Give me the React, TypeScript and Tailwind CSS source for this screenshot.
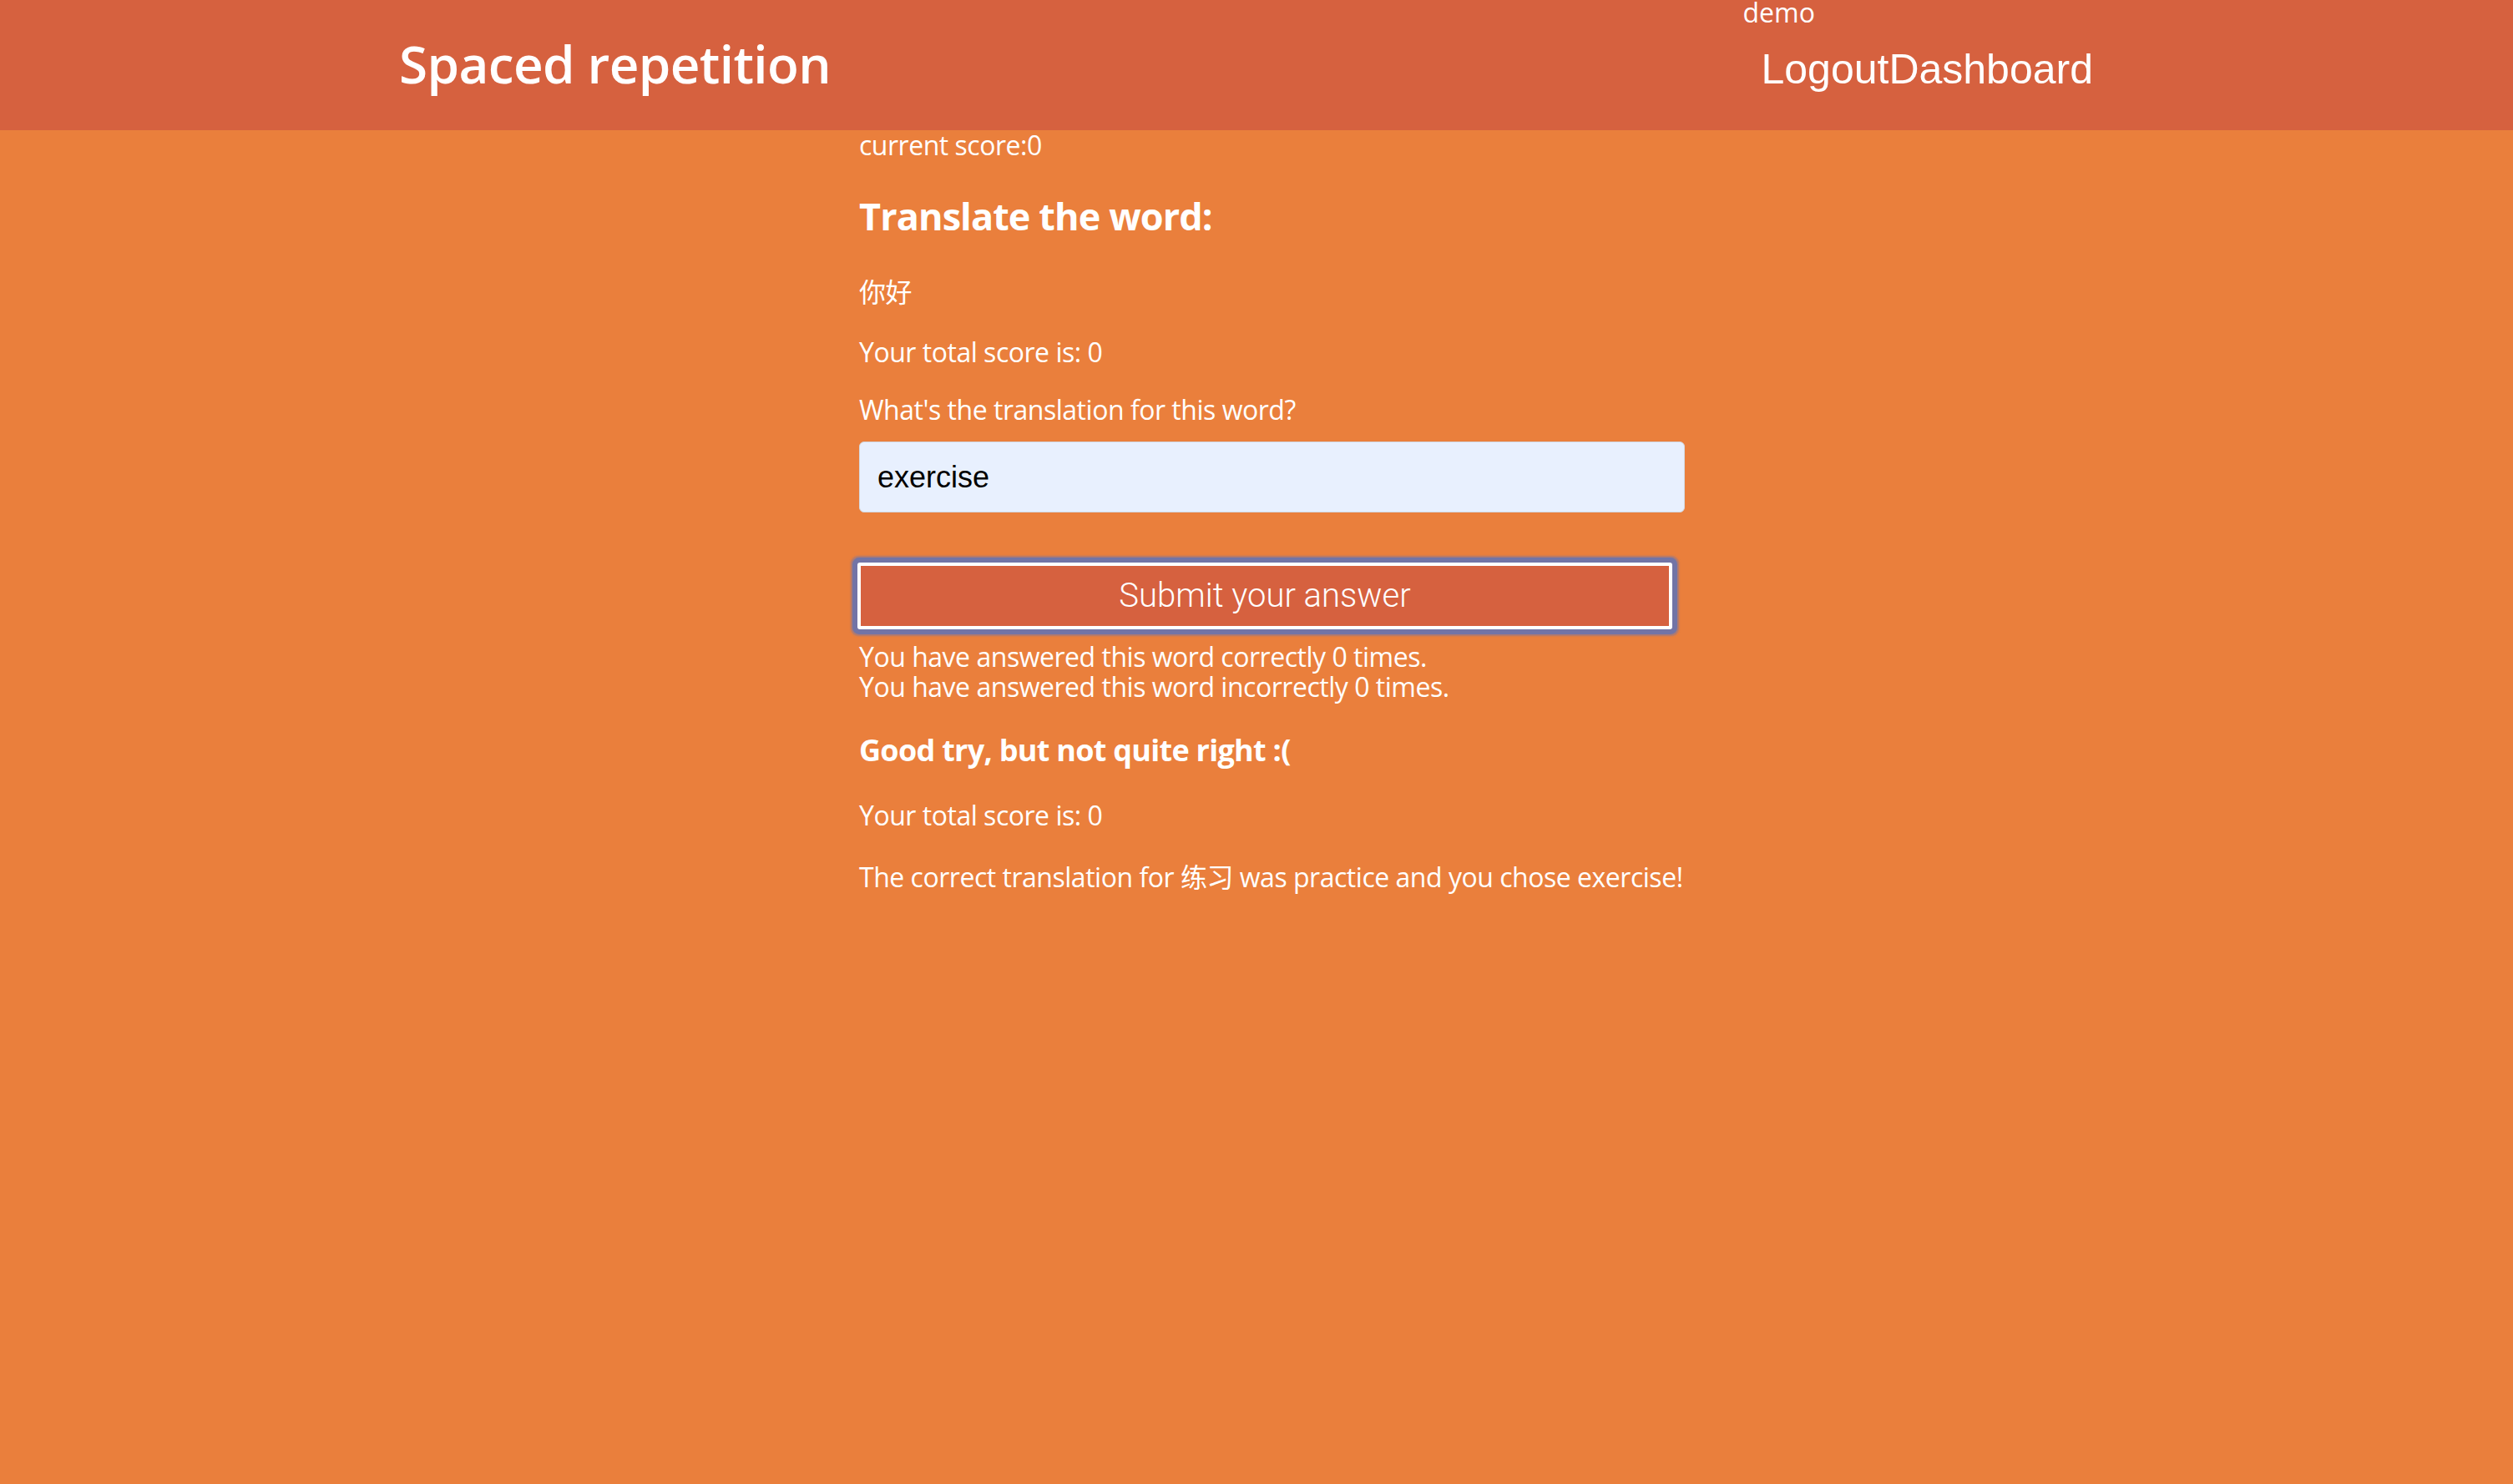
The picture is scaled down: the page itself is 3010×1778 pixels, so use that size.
import { useState } from "react";

export default function App() {
  const [answer, setAnswer] = useState("exercise");

  return (
    <div className="min-h-screen bg-[#EA7F3C] font-['Open_Sans','Noto_Sans_CJK_SC',sans-serif] text-white">
      {/* Top bar */}
      <header className="flex h-[156px] items-start justify-between bg-[#D6613F] pl-[478px] pr-[503px]">
        <h1 className="pt-[45px] text-[62px] font-semibold leading-[62px] tracking-[-0.01em]">
          Spaced repetition
        </h1>
        <div className="flex flex-col">
          <span className="text-[32px] leading-[30px]">demo</span>
          <nav className="mt-[28px] flex pl-[22px] font-['Liberation_Sans',Arial,sans-serif] text-[50px] leading-[50px]">
            <a href="#logout">Logout</a>
            <a href="#dashboard">Dashboard</a>
          </nav>
        </div>
      </header>

      {/* Learning panel */}
      <main className="ml-[1029px] w-[989px] text-[32px] leading-[36px] tracking-[-0.015em]">
        <p>current score:0</p>

        <h2 className="mt-[40px] text-[45px] font-bold leading-[54px] tracking-[-0.02em]">
          Translate the word:
        </h2>

        <p className="mt-[46px]">你好</p>

        <p className="mt-[36px]">Your total score is: 0</p>

        <form className="mt-[33px] flex flex-col" onSubmit={(e) => e.preventDefault()}>
          <label htmlFor="answer">What's the translation for this word?</label>
          <input
            id="answer"
            value={answer}
            onChange={(e) => setAnswer(e.target.value)}
            className="mt-[20px] h-[85px] w-[989px] rounded-[6px] border border-[#D3D8E0] bg-[#E8F0FE] pl-[21px] font-['Liberation_Sans',Arial,sans-serif] text-[36px] tracking-normal text-black outline-none"
          />
          <button
            type="submit"
            className="mt-[60px] ml-[-2px] h-[80px] w-[976px] rounded-[3px] border-[4px] border-white bg-[#D6613F] font-['Roboto','Liberation_Sans',sans-serif] text-[40px] font-light tracking-normal text-white shadow-[0_0_0_6px_#7274A6,0_0_2px_8px_rgba(114,116,166,0.55)]"
          >
            Submit your answer
          </button>
        </form>

        <div className="mt-[15px]">
          <p>You have answered this word correctly 0 times.</p>
          <p>You have answered this word incorrectly 0 times.</p>
        </div>

        <h3 className="mt-[36px] text-[36px] font-bold leading-[43px] tracking-[-0.02em]">
          Good try, but not quite right :(
        </h3>

        <p className="mt-[39px]">Your total score is: 0</p>

        <p className="mt-[38px] whitespace-nowrap">
          The correct translation for 练习 was practice and you chose exercise!
        </p>
      </main>
    </div>
  );
}
